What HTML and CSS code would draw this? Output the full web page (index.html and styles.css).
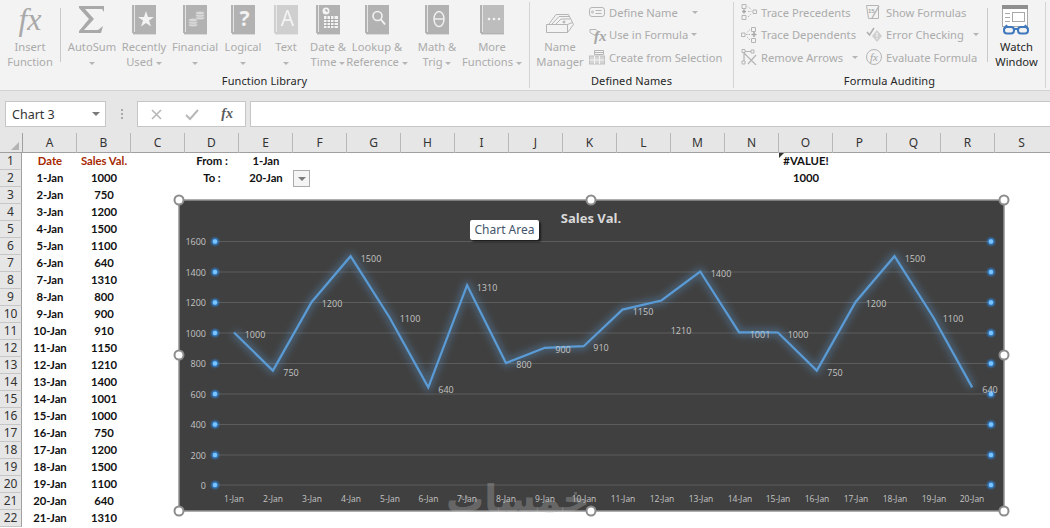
FILE: index.html
```html
<!DOCTYPE html>
<html lang="en">
<head>
<meta charset="utf-8">
<title>Excel chart</title>
<link rel="stylesheet" href="styles.css">
</head>
<body>
<svg class="defs" width="0" height="0" aria-hidden="true">
  <symbol id="book" viewBox="0 0 24 30">
    <rect width="24" height="28" fill="#b2b2b2"/>
    <rect x="2" width="1" height="27" fill="#e4e4e4"/>
    <rect x="1" y="28" width="23" height="1.4" fill="#b2b2b2"/>
  </symbol>
</svg>
<div class="page">
  <div class="ribbon">
    <section class="group g-func">
      <div class="gbody">
        <div class="btn w-insert">
          <div class="ico"><span class="fx-big">fx</span></div>
          <div class="lbl">Insert<br>Function</div>
        </div>
        <div class="vsep"></div>
        <div class="btn w-auto">
          <div class="ico"><svg width="26" height="27" viewBox="0 0 26 27"><path d="M0 0h25v6l-2-3H6l9 10-10 11h14l5-4-2 7H0v-2l10-12L0 2z" fill="#a9a9a9"/></svg></div>
          <div class="lbl">AutoSum<br><span class="caret"></span></div>
        </div>
        <div class="btn w-recent">
          <div class="ico"><svg class="bk" viewBox="0 0 24 30"><use href="#book"/><polygon points="14,6 16,12 22,12 17,15.500 19,21.500 14,18 9,21.500 11,15.500 6,12 12,12" fill="#f3f3f3"/></svg></div>
          <div class="lbl">Recently<br>Used <span class="caret"></span></div>
        </div>
        <div class="btn w-fin">
          <div class="ico"><svg class="bk" viewBox="0 0 24 30"><use href="#book"/><g fill="#d9d9d9" stroke="#b2b2b2" stroke-width=".6"><ellipse cx="17" cy="13" rx="4.500" ry="1.800"/><ellipse cx="17" cy="10.500" rx="4.500" ry="1.800"/><ellipse cx="17" cy="8" rx="4.500" ry="1.800"/><ellipse cx="10" cy="20" rx="4.500" ry="1.800"/><ellipse cx="10" cy="17.500" rx="4.500" ry="1.800"/><ellipse cx="10" cy="15" rx="4.500" ry="1.800"/></g></svg></div>
          <div class="lbl">Financial<br><span class="caret"></span></div>
        </div>
        <div class="btn w-log">
          <div class="ico"><span class="bookwrap"><svg class="bk" viewBox="0 0 24 30"><use href="#book"/></svg><span class="bk-char q">?</span></span></div>
          <div class="lbl">Logical<br><span class="caret"></span></div>
        </div>
        <div class="btn w-text">
          <div class="ico"><span class="bookwrap faded"><svg class="bk" viewBox="0 0 24 30"><use href="#book"/></svg><span class="bk-char a">A</span></span></div>
          <div class="lbl">Text<br><span class="caret"></span></div>
        </div>
        <div class="btn w-date">
          <div class="ico"><svg class="bk" viewBox="0 0 24 30"><use href="#book"/><circle cx="10" cy="6" r="3.500" fill="#f3f3f3"/><path d="M10 4v2h2" stroke="#999" fill="none"/><path d="M8 11h14v12H8z" fill="#f3f3f3"/><path d="M8 14.500h14M8 17.500h14M8 20.500h14M11 11v12M14.500 11v12M18 11v12" stroke="#999" stroke-width=".8"/></svg></div>
          <div class="lbl">Date &amp;<br>Time <span class="caret"></span></div>
        </div>
        <div class="btn w-look">
          <div class="ico"><svg class="bk" viewBox="0 0 24 30"><use href="#book"/><circle cx="12.500" cy="11" r="4.500" fill="none" stroke="#f3f3f3" stroke-width="1.600"/><path d="M16 14.500l4 5" stroke="#f3f3f3" stroke-width="2"/></svg></div>
          <div class="lbl">Lookup &amp;<br>Reference <span class="caret"></span></div>
        </div>
        <div class="btn w-math">
          <div class="ico"><svg class="bk" viewBox="0 0 24 30"><use href="#book"/><ellipse cx="14" cy="14" rx="5" ry="7.500" fill="none" stroke="#f3f3f3" stroke-width="1.400"/><path d="M9 14h10" stroke="#f3f3f3" stroke-width="1.400"/></svg></div>
          <div class="lbl">Math &amp;<br>Trig <span class="caret"></span></div>
        </div>
        <div class="btn w-more">
          <div class="ico"><svg class="bk" viewBox="0 0 24 30"><use href="#book"/><rect x="3" width="21" height="28" fill="#bdbdbd"/><g fill="#f3f3f3"><circle cx="9" cy="14" r="1.300"/><circle cx="14" cy="14" r="1.300"/><circle cx="19" cy="14" r="1.300"/></g></svg></div>
          <div class="lbl">More<br>Functions <span class="caret"></span></div>
        </div>
      </div>
      <div class="gname">Function Library</div>
    </section>

    <section class="group g-names">
      <div class="gbody">
        <div class="btn w-mgr">
          <div class="ico ico-mgr"><svg width="28" height="22" viewBox="0 0 28 22" fill="none" stroke="#b5b5b5"><path d="M.5 13.500h21v8H.5z" fill="#f3f3f3"/><path d="M21.500 21.500l6-8-5-10"/><path d="M3 13l7-9.500h12.500"/><path d="M6 13l7-7.500h10"/><path d="M10 13l5-5h9"/><path d="M21.500 13.500l5-2" /><circle cx="18" cy="11" r="1" fill="#b5b5b5"/></svg></div>
          <div class="lbl">Name<br>Manager</div>
        </div>
        <div class="col c-names">
          <div class="sm"><svg class="si" viewBox="0 0 16 16" fill="none" stroke="#b5b5b5"><rect x=".5" y="3.500" width="15" height="9" rx="2.500"/><circle cx="3.500" cy="8" r="1"/><path d="M6.500 6.500h6M6.500 9.500h6"/></svg><span>Define Name</span><span class="caret far"></span></div>
          <div class="sm"><span class="si-fx"><svg class="si" viewBox="0 0 16 16" fill="none" stroke="#b5b5b5"><path d="M1 2.500h6l3 3-4 3-5-3z"/></svg><em>fx</em></span><span>Use in Formula</span><span class="caret near"></span></div>
          <div class="sm"><svg class="si" viewBox="0 0 16 16" fill="none" stroke="#b5b5b5"><path d="M5.500 5.500V1.500h9v4z"/><path d="M5.500 3.500h9"/><rect x=".5" y="7" width="15" height="8" fill="#d5d5d5" stroke="#c0c0c0"/><path d="M.5 11h15M5.500 7v8M10.500 7v8" stroke="#f3f3f3"/></svg><span>Create from Selection</span></div>
        </div>
      </div>
      <div class="gname">Defined Names</div>
    </section>

    <section class="group g-audit">
      <div class="gbody">
        <div class="col c-trace">
          <div class="sm"><svg class="si" viewBox="0 0 16 16" fill="none" stroke="#b5b5b5"><path d="M1 .500h4v4H1zM1 11.500h4v4H1zM12 6h3.500v3.500H12z"/><path d="M1 7.500h4M3 5.500v4" stroke-width="1.600" stroke="#a8a8a8"/><path d="M7 2.500l3 3M7 13l3-3M7 7.500h3.500" stroke-dasharray="1.500 1"/></svg><span>Trace Precedents</span></div>
          <div class="sm"><svg class="si" viewBox="0 0 16 16" fill="none" stroke="#b5b5b5"><path d="M10.500 .500h4v4h-4zM10.500 11.500h4v4h-4zM.5 6h3.500v3.500H.5z"/><path d="M10.500 7.500h5M13 5v5" stroke-width="1.600" stroke="#a8a8a8"/><path d="M9 2.500l-3 3M9 13l-3-3M5 7.500h4" stroke-dasharray="1.500 1"/></svg><span>Trace Dependents</span></div>
          <div class="sm"><svg class="si" viewBox="0 0 16 16" fill="none" stroke="#b5b5b5"><path d="M1 .500h3v3H1zM10 1h3v3h-3zM1 12h3v3H1z"/><path d="M3 4l12 12M15 6L7 15M3 4v8M4 2.500h6" stroke-width="1.200"/></svg><span>Remove Arrows</span><span class="caret far-r"></span></div>
        </div>
        <div class="col c-show">
          <div class="sm"><svg class="si" viewBox="0 0 16 16" fill="none" stroke="#b5b5b5"><path d="M.5 1.500h12v13h-10z"/><path d="M13 2L6 14" stroke-width="1.400"/><text x="2" y="9" class="si-num">15</text></svg><span>Show Formulas</span></div>
          <div class="sm"><svg class="si" viewBox="0 0 16 16"><path d="M1 5l2.500 3L8 1" fill="none" stroke="#b0b0b0" stroke-width="1.600"/><path d="M11 3l5 6-5 6-5-6z" fill="#cfcfcf"/><path d="M11 5.500v4.500M11 11v1.200" stroke="#f3f3f3" stroke-width="1.300"/></svg><span>Error Checking</span><span class="caret far-e"></span></div>
          <div class="sm"><span class="si-eval"><em>fx</em></span><span>Evaluate Formula</span></div>
        </div>
        <div class="vsep v-watch"></div>
        <div class="btn w-watch">
          <div class="ico"><svg width="29" height="30" viewBox="0 0 29 30"><rect x=".5" y=".5" width="25" height="21" fill="#fff" stroke="#a8a8a8"/><rect width="26" height="4" fill="#8f8f8f"/><path d="M3 8.500h5M3 12.500h5M3 16.500h5" stroke="#a8a8a8"/><rect x="10.500" y="7.500" width="12" height="9" fill="none" stroke="#a8a8a8"/><g fill="none" stroke="#3f78bd" stroke-width="2"><rect x="2" y="22" width="10" height="6.500" rx="3"/><rect x="16" y="22" width="10" height="6.500" rx="3"/><path d="M12 24h4M2 24l3-4M26 24l-3-4"/></g></svg></div>
          <div class="lbl on">Watch<br>Window</div>
        </div>
      </div>
      <div class="gname">Formula Auditing</div>
    </section>
  </div>

  <div class="fbar">
    <div class="namebox"><span>Chart 3</span><span class="caret dark"></span></div>
    <div class="dots"><i></i><i></i><i></i></div>
    <div class="fxbox">
      <svg width="13" height="13" viewBox="0 0 13 13" fill="none" stroke="#b8b8b8" stroke-width="1.600"><path d="M2 2l9 9M11 2l-9 9"/></svg>
      <svg width="14" height="13" viewBox="0 0 14 13" fill="none" stroke="#b8b8b8" stroke-width="2"><path d="M1 7l4 4 8-9"/></svg>
      <em class="fx-small">fx</em>
    </div>
    <div class="finput"></div>
  </div>

  <div class="sheet">
    <div class="colheads">
      <div class="corner"></div>
      <div class="ch">A</div><div class="ch">B</div><div class="ch">C</div><div class="ch">D</div><div class="ch">E</div><div class="ch">F</div><div class="ch">G</div><div class="ch">H</div><div class="ch">I</div><div class="ch">J</div><div class="ch">K</div><div class="ch">L</div><div class="ch">M</div><div class="ch">N</div><div class="ch">O</div><div class="ch">P</div><div class="ch">Q</div><div class="ch">R</div><div class="ch">S</div>
    </div>
    <div class="row"><div class="rh">1</div><div class="c ca red">Date</div><div class="c cb red">Sales Val.</div><div class="c cd">From :</div><div class="c ce">1-Jan</div><div class="c co err">#VALUE!</div></div>
    <div class="row"><div class="rh">2</div><div class="c ca">1-Jan</div><div class="c cb">1000</div><div class="c cd">To :</div><div class="c ce">20-Jan</div><div class="c cf"><span class="ddbtn"><span class="caret dark"></span></span></div><div class="c co">1000</div></div>
    <div class="row"><div class="rh">3</div><div class="c ca">2-Jan</div><div class="c cb">750</div></div>
    <div class="row"><div class="rh">4</div><div class="c ca">3-Jan</div><div class="c cb">1200</div></div>
    <div class="row"><div class="rh">5</div><div class="c ca">4-Jan</div><div class="c cb">1500</div></div>
    <div class="row"><div class="rh">6</div><div class="c ca">5-Jan</div><div class="c cb">1100</div></div>
    <div class="row"><div class="rh">7</div><div class="c ca">6-Jan</div><div class="c cb">640</div></div>
    <div class="row"><div class="rh">8</div><div class="c ca">7-Jan</div><div class="c cb">1310</div></div>
    <div class="row"><div class="rh">9</div><div class="c ca">8-Jan</div><div class="c cb">800</div></div>
    <div class="row"><div class="rh">10</div><div class="c ca">9-Jan</div><div class="c cb">900</div></div>
    <div class="row"><div class="rh">11</div><div class="c ca">10-Jan</div><div class="c cb">910</div></div>
    <div class="row"><div class="rh">12</div><div class="c ca">11-Jan</div><div class="c cb">1150</div></div>
    <div class="row"><div class="rh">13</div><div class="c ca">12-Jan</div><div class="c cb">1210</div></div>
    <div class="row"><div class="rh">14</div><div class="c ca">13-Jan</div><div class="c cb">1400</div></div>
    <div class="row"><div class="rh">15</div><div class="c ca">14-Jan</div><div class="c cb">1001</div></div>
    <div class="row"><div class="rh">16</div><div class="c ca">15-Jan</div><div class="c cb">1000</div></div>
    <div class="row"><div class="rh">17</div><div class="c ca">16-Jan</div><div class="c cb">750</div></div>
    <div class="row"><div class="rh">18</div><div class="c ca">17-Jan</div><div class="c cb">1200</div></div>
    <div class="row"><div class="rh">19</div><div class="c ca">18-Jan</div><div class="c cb">1500</div></div>
    <div class="row"><div class="rh">20</div><div class="c ca">19-Jan</div><div class="c cb">1100</div></div>
    <div class="row"><div class="rh">21</div><div class="c ca">20-Jan</div><div class="c cb">640</div></div>
    <div class="row"><div class="rh">22</div><div class="c ca">21-Jan</div><div class="c cb">1310</div></div>
  </div>

  <svg class="chart" viewBox="179 200 825 311" width="825" height="311">
    <defs>
      <filter id="glow" x="-5%" y="-10%" width="110%" height="120%"><feGaussianBlur stdDeviation="3"/></filter>
      <filter id="dotglow" x="-100%" y="-100%" width="300%" height="300%"><feGaussianBlur stdDeviation="1"/></filter>
    </defs>
    <rect x="179" y="200" width="825" height="311" class="c-bg"/>
    <g class="grid">
      <path d="M215 241.500H991M215 272H991M215 302.500H991M215 333H991M215 363.500H991M215 394H991M215 424.500H991M215 455H991M215 485H991"/>
    </g>
    <polyline class="glow" filter="url(#glow)" points="234,332.500 272.900,370.600 311.700,302 350.600,256.200 389.400,317.200 428.300,387.400 467.100,285.200 506,363 544.800,347.800 583.700,346.200 622.500,309.600 661.400,300.500 700.200,271.500 739.100,332.300 777.900,332.500 816.800,370.600 855.600,302 894.500,256.200 933.300,317.200 972.200,387.400"/>
    <polyline class="line" points="234,332.500 272.900,370.600 311.700,302 350.600,256.200 389.400,317.200 428.300,387.400 467.100,285.200 506,363 544.800,347.800 583.700,346.200 622.500,309.600 661.400,300.500 700.200,271.500 739.100,332.300 777.900,332.500 816.800,370.600 855.600,302 894.500,256.200 933.300,317.200 972.200,387.400"/>
    <g class="dots-glow" filter="url(#dotglow)">
      <circle cx="215" cy="241.500" r="3.500"/><circle cx="215" cy="272" r="3.500"/><circle cx="215" cy="302.500" r="3.500"/><circle cx="215" cy="333" r="3.500"/><circle cx="215" cy="363.500" r="3.500"/><circle cx="215" cy="394" r="3.500"/><circle cx="215" cy="424.500" r="3.500"/><circle cx="215" cy="455" r="3.500"/><circle cx="215" cy="485" r="3.500"/>
      <circle cx="991" cy="241.500" r="3.500"/><circle cx="991" cy="272" r="3.500"/><circle cx="991" cy="302.500" r="3.500"/><circle cx="991" cy="333" r="3.500"/><circle cx="991" cy="363.500" r="3.500"/><circle cx="991" cy="394" r="3.500"/><circle cx="991" cy="424.500" r="3.500"/><circle cx="991" cy="455" r="3.500"/><circle cx="991" cy="485" r="3.500"/>
    </g>
    <g class="dots-core">
      <circle cx="215" cy="241.500" r="2.200"/><circle cx="215" cy="272" r="2.200"/><circle cx="215" cy="302.500" r="2.200"/><circle cx="215" cy="333" r="2.200"/><circle cx="215" cy="363.500" r="2.200"/><circle cx="215" cy="394" r="2.200"/><circle cx="215" cy="424.500" r="2.200"/><circle cx="215" cy="455" r="2.200"/><circle cx="215" cy="485" r="2.200"/>
      <circle cx="991" cy="241.500" r="2.200"/><circle cx="991" cy="272" r="2.200"/><circle cx="991" cy="302.500" r="2.200"/><circle cx="991" cy="333" r="2.200"/><circle cx="991" cy="363.500" r="2.200"/><circle cx="991" cy="394" r="2.200"/><circle cx="991" cy="424.500" r="2.200"/><circle cx="991" cy="455" r="2.200"/><circle cx="991" cy="485" r="2.200"/>
    </g>
    <text x="591" y="223" class="c-title">Sales Val.</text>
    <g class="y-ax">
      <text x="206" y="245">1600</text><text x="206" y="275.500">1400</text><text x="206" y="306">1200</text><text x="206" y="336.500">1000</text><text x="206" y="367">800</text><text x="206" y="397.500">600</text><text x="206" y="428">400</text><text x="206" y="458.500">200</text><text x="206" y="488.500">0</text>
    </g>
    <g class="x-ax">
      <text x="234" y="502">1-Jan</text><text x="273" y="502">2-Jan</text><text x="312" y="502">3-Jan</text><text x="351" y="502">4-Jan</text><text x="390" y="502">5-Jan</text><text x="428.500" y="502">6-Jan</text><text x="467" y="502">7-Jan</text><text x="506" y="502">8-Jan</text><text x="545" y="502">9-Jan</text><text x="584" y="502">10-Jan</text><text x="623" y="502">11-Jan</text><text x="662" y="502">12-Jan</text><text x="701" y="502">13-Jan</text><text x="740" y="502">14-Jan</text><text x="778" y="502">15-Jan</text><text x="817" y="502">16-Jan</text><text x="856" y="502">17-Jan</text><text x="895" y="502">18-Jan</text><text x="934" y="502">19-Jan</text><text x="972" y="502">20-Jan</text>
    </g>
    <g class="d-lab">
      <text x="255" y="337.500">1000</text><text x="291" y="375.500">750</text><text x="332" y="306.500">1200</text><text x="371" y="261.500">1500</text><text x="410" y="321.500">1100</text><text x="446" y="392.500">640</text><text x="487" y="290.500">1310</text><text x="524" y="367.500">800</text><text x="563" y="352.500">900</text><text x="601" y="350.500">910</text><text x="643" y="314.500">1150</text><text x="681" y="333.500">1210</text><text x="721" y="276.500">1400</text><text x="760" y="337.500">1001</text><text x="798" y="337.500">1000</text><text x="835" y="375.500">750</text><text x="876" y="306.500">1200</text><text x="915" y="261.500">1500</text><text x="953" y="321.500">1100</text><text x="990" y="392.500">640</text>
    </g>
    <g class="handles">
      <circle cx="179" cy="200" r="4.500"/><circle cx="591" cy="200" r="4.500"/><circle cx="1004" cy="200" r="4.500"/><circle cx="179" cy="355" r="4.500"/><circle cx="1004" cy="355" r="4.500"/><circle cx="179" cy="511" r="4.500"/><circle cx="591" cy="511" r="4.500"/><circle cx="1004" cy="511" r="4.500"/>
    </g>
  </svg>
  <div class="tip">Chart Area</div>
  <div class="wm" dir="rtl" lang="ar">خمسات</div>
</div>
</body>
</html>
```

FILE: styles.css
```css
* { box-sizing: border-box; }
html, body { margin: 0; padding: 0; }
body { width: 1050px; height: 528px; overflow: hidden; background: #fff; font-family: "Noto Sans", "Open Sans", sans-serif; }
.defs { position: absolute; }
.page { position: relative; width: 1050px; height: 528px; overflow: hidden; }

/* ribbon */
.ribbon { display: flex; height: 91px; background: #f3f3f3; border-bottom: 1px solid #d2d2d2; }
.group { display: flex; flex-direction: column; height: 86px; border-right: 1px solid #d4d4d4; margin-top: 2px; }
.g-func { width: 530px; }
.g-names { width: 204px; }
.g-audit { width: 312px; }
.gbody { display: flex; height: 70px; }
.gname { font-size: 11px; line-height: 16px; text-align: center; color: #262626; letter-spacing: .1px; margin-top: 3px; }
.btn { flex: none; display: flex; flex-direction: column; align-items: center; }
.ico { height: 35px; display: flex; align-items: center; justify-content: center; }
.lbl { font-size: 11.200px; line-height: 15.500px; margin-top: 1.500px; text-align: center; color: #ababab; white-space: nowrap; }
.lbl.on { color: #262626; }
.w-insert { width: 60px; }
.w-auto { width: 56px; margin-left: 3px; }
.w-recent { width: 48px; }
.w-fin { width: 54px; }
.w-log { width: 42px; }
.w-text { width: 44px; }
.w-date { width: 40px; }
.w-look { width: 58px; }
.w-math { width: 62px; }
.w-more { width: 48px; }
.w-mgr { width: 56px; margin-left: 2px; }
.w-watch { width: 57px; }
.vsep { width: 1px; flex: none; height: 54px; margin-top: 6px; background: #c9c9c9; }
.fx-big { font: italic 32px "Liberation Serif", serif; color: #a9a9a9; }
.bk { width: 24px; height: 30px; display: block; }
.bookwrap { position: relative; display: block; width: 24px; height: 30px; }
.bookwrap.faded { opacity: .55; }
.bk-char { position: absolute; left: 3px; right: 0; top: 0; height: 28px; line-height: 27px; text-align: center; color: #f3f3f3; font-weight: 700; font-size: 21px; }
.bk-char.a { font-weight: 400; }
.caret { display: inline-block; width: 0; height: 0; border-left: 3px solid transparent; border-right: 3px solid transparent; border-top: 3px solid #b5b5b5; vertical-align: middle; }
.caret.dark { border-left-width: 4px; border-right-width: 4px; border-top: 4px solid #7a7a7a; }
.far { margin-left: 14px; }
.near { margin-left: 3px; }
.far-r { margin-left: 9px; }
.far-e { margin-left: 9px; }
.ico-mgr { align-items: flex-end; height: 31px; margin-bottom: 4px; }

/* small ribbon rows */
.col { display: flex; flex-direction: column; flex: none; margin-top: -1px; }
.c-names { width: 145px; padding-left: 1px; }
.c-trace { width: 132px; padding-left: 7px; }
.c-show { width: 121px; }
.sm { height: 22.500px; display: flex; align-items: center; font-size: 11.200px; color: #ababab; white-space: nowrap; }
.sm > span { white-space: pre; }
.si { width: 16px; height: 16px; margin-right: 4px; flex: none; display: block; }
.si-num { font: 700 6px "Liberation Sans", sans-serif; fill: #a8a8a8; stroke: none; }
.si-fx { position: relative; width: 20px; height: 16px; flex: none; }
.si-fx em { position: absolute; left: 5px; top: 0; font: italic 700 15px/18px "Liberation Serif", serif; color: #a6a6a6; }
.si-eval { width: 16px; height: 16px; margin-right: 4px; flex: none; border: 1px solid #b5b5b5; border-radius: 50%; display: flex; align-items: center; justify-content: center; }
.si-eval em { font: italic 11px/14px "Liberation Serif", serif; color: #a6a6a6; }

/* formula bar */
.fbar { height: 39px; background: #e6e6e6; padding: 10px 0 3px 5px; display: flex; }
.namebox { width: 101px; height: 26px; background: #fff; border: 1px solid #c6c6c6; display: flex; align-items: center; justify-content: space-between; padding: 0 5px 0 6px; font-size: 12.500px; color: #333; }
.dots { width: 31px; display: flex; flex-direction: column; align-items: center; justify-content: center; gap: 2px; }
.dots i { width: 2px; height: 2px; background: #a8a8a8; display: block; }
.fxbox { width: 109px; height: 26px; background: #fff; border: 1px solid #c6c6c6; display: flex; align-items: center; justify-content: space-between; padding: 0 12px; }
.fx-small { font: italic 700 14px "Liberation Serif", serif; color: #5a5a5a; }
.finput { flex: 1; margin-left: 4px; height: 26px; background: #fff; border: 1px solid #c6c6c6; border-right: 0; }

/* sheet */
.colheads, .row { display: grid; grid-template-columns: 22px repeat(19, 54px); }
.colheads { height: 23px; background: #e6e6e6; border-bottom: 1px solid #a0a0a0; }
.corner { position: relative; }
.corner::after { content: ""; position: absolute; right: 3px; bottom: 3px; border-left: 8px solid transparent; border-bottom: 8px solid #b4b4b4; }
.ch { border-left: 1px solid #b8b8b8; margin-top: 3px; font-size: 12px; line-height: 20px; text-align: center; color: #333; }
.corner + .ch { border-left-color: #a0a0a0; }
.row { height: 17px; }
.rh { grid-column: 1; background: #e6e6e6; border-right: 1px solid #a0a0a0; border-bottom: 1px solid #c6c6c6; font-size: 12px; line-height: 16px; text-align: center; color: #333; }
.c { padding-left: 2px; font: 700 11.300px/15px Lato, "Liberation Sans", sans-serif; text-align: center; color: #111; white-space: nowrap; }
.ca { grid-column: 2; }
.cb { grid-column: 3; }
.cd { grid-column: 5; }
.ce { grid-column: 6; }
.cf { grid-column: 7; display: flex; padding-left: 1px; }
.co { grid-column: 16; position: relative; }
.red { color: #a62800; }
.err::before { content: ""; position: absolute; left: 1px; top: 0; border-top: 5px solid #333; border-right: 5px solid transparent; }
.ddbtn { width: 17px; height: 17px; border: 1px solid #ababab; background: #f4f4f4; display: flex; align-items: center; justify-content: center; }

/* chart */
.chart { position: absolute; left: 179px; top: 200px; overflow: visible; font-family: "Open Sans", sans-serif; }
.c-bg { fill: #404040; stroke: #929292; stroke-width: 1.500; }
.grid path { stroke: #5c5c5c; stroke-width: 1; fill: none; }
.glow { fill: none; stroke: #5b9bd5; stroke-width: 9; opacity: .3; stroke-linejoin: round; }
.line { fill: none; stroke: #5b9bd5; stroke-width: 2.200; stroke-linejoin: miter; }
.dots-glow circle { fill: #2f8fef; }
.dots-core circle { fill: #7cc4ff; }
.c-title { font-size: 13px; font-weight: 700; fill: #d9d9d9; text-anchor: middle; }
.y-ax text { font-size: 9px; fill: #c4c4c4; text-anchor: end; }
.x-ax text { font-size: 8.500px; fill: #c4c4c4; text-anchor: middle; }
.d-lab text { font-size: 9px; fill: #c4c4c4; text-anchor: middle; }
.handles circle { fill: #fff; stroke: #8c8c8c; stroke-width: 2; }
.tip { position: absolute; left: 470px; top: 220px; width: 69px; height: 20px; background: #fff; border-radius: 2px; box-shadow: 2px 2px 2px rgba(0,0,0,.55); font-size: 12px; line-height: 20px; text-align: center; color: #44546a; }
.wm { position: absolute; left: 462px; top: 475px; width: 128px; font: 700 38px/48px "DejaVu Sans", sans-serif; text-align: center; color: rgba(200,200,200,.3); white-space: nowrap; }
```
